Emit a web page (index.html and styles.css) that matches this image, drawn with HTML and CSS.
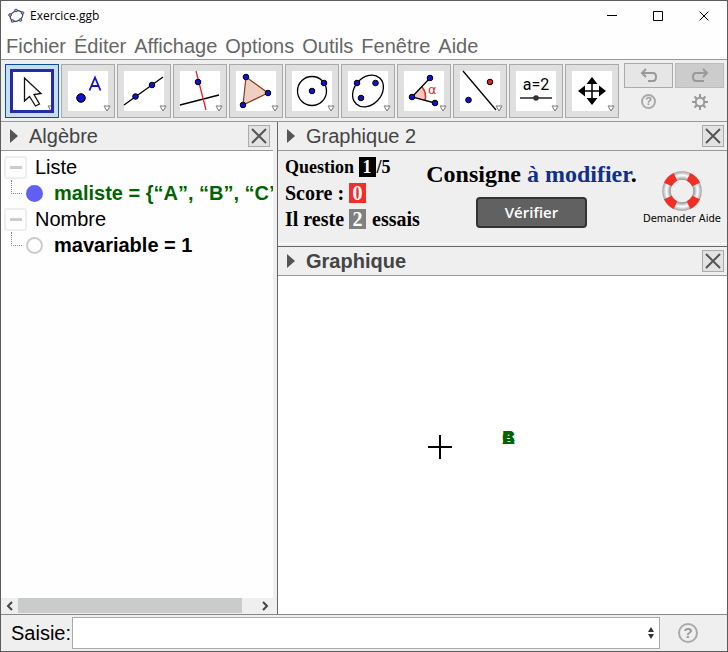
FILE: index.html
```html
<!DOCTYPE html>
<html lang="fr">
<head>
<meta charset="utf-8">
<title>Exercice.ggb</title>
<link rel="stylesheet" href="styles.css">
</head>
<body>
<div class="window">
  <header class="titlebar">
    <svg class="app-icon" viewBox="0 0 17 16" aria-hidden="true">
      <ellipse cx="8.500" cy="8" rx="6.500" ry="5" fill="none" stroke="#444" stroke-width="1.200" transform="rotate(-25 8.500 8)"/>
      <g fill="#99f" stroke="#333" stroke-width=".7"><circle cx="8" cy="2.500" r="1.400"/><circle cx="14.500" cy="5" r="1.400"/><circle cx="12.500" cy="12" r="1.400"/><circle cx="4.500" cy="13" r="1.400"/><circle cx="2" cy="7" r="1.400"/></g>
    </svg>
    <h1 class="title">Exercice.ggb</h1>
    <div class="window-controls">
      <button type="button" aria-label="Réduire"><svg viewBox="0 0 12 12"><path d="M1 5.500h10"/></svg></button>
      <button type="button" aria-label="Agrandir"><svg viewBox="0 0 12 12"><path d="M1.500 1.500h9v9h-9z"/></svg></button>
      <button type="button" aria-label="Fermer"><svg viewBox="0 0 12 12"><path d="M1.500 1.500l9 9M10.500 1.500l-9 9"/></svg></button>
    </div>
  </header>

  <nav class="menubar">
    <a href="#">Fichier</a><a href="#">Éditer</a><a href="#">Affichage</a><a href="#">Options</a><a href="#">Outils</a><a href="#">Fenêtre</a><a href="#">Aide</a>
  </nav>

  <div class="toolbar">
    <div class="tools">
      <button type="button" class="tool selected" aria-label="Déplacer"><svg viewBox="0 0 40 40"><path d="M12.500 7v23l5-4.500 6 9.500 4-2-5.500-9.500 7-1z" fill="#fff" stroke="#111" stroke-width="1.300"/><path class="more" d="M36 35h6l-3 5z"/></svg></button>
      <button type="button" class="tool" aria-label="Point"><svg viewBox="0 0 40 40"><circle class="pt" cx="13" cy="27" r="4.300"/><path d="M21.500 19.500L27 6.500l5.500 13M23.500 15h7" fill="none" stroke="#11c" stroke-width="1.800"/><path class="more" d="M36 35h6l-3 5z"/></svg></button>
      <button type="button" class="tool" aria-label="Droite"><svg viewBox="0 0 40 40"><path class="ln" d="M0 34L39 6"/><circle class="pt" cx="11.500" cy="25.500" r="2.800"/><circle class="pt" cx="28" cy="14" r="2.800"/><path class="more" d="M36 35h6l-3 5z"/></svg></button>
      <button type="button" class="tool" aria-label="Perpendiculaire"><svg viewBox="0 0 40 40"><path class="ln" d="M0 34l39-10"/><path d="M16 0l10 39" stroke="#e22" stroke-width="1.300"/><circle class="pt" cx="18" cy="11" r="2.800"/><path class="more" d="M36 35h6l-3 5z"/></svg></button>
      <button type="button" class="tool" aria-label="Polygone"><svg viewBox="0 0 40 40"><path d="M10 6l22 16-25 12z" fill="#efcfc0" stroke="#833d1c" stroke-width="1.200"/><circle class="pt" cx="10" cy="6" r="2.800"/><circle class="pt" cx="32" cy="22" r="2.800"/><circle class="pt" cx="7" cy="34" r="2.800"/><path class="more" d="M36 35h6l-3 5z"/></svg></button>
      <button type="button" class="tool" aria-label="Cercle"><svg viewBox="0 0 40 40"><circle class="ln" cx="20" cy="20" r="14.500"/><circle class="pt" cx="20" cy="20" r="2.800"/><circle class="pt" cx="32" cy="12" r="2.800"/><path class="more" d="M36 35h6l-3 5z"/></svg></button>
      <button type="button" class="tool" aria-label="Ellipse"><svg viewBox="0 0 40 40"><ellipse class="ln" cx="20" cy="20" rx="17.500" ry="13.500" transform="rotate(-48 20 20)"/><circle class="pt" cx="9" cy="12" r="2.800"/><circle class="pt" cx="27.500" cy="12" r="2.800"/><circle class="pt" cx="13" cy="27" r="2.800"/><path class="more" d="M36 35h6l-3 5z"/></svg></button>
      <button type="button" class="tool" aria-label="Angle"><svg viewBox="0 0 40 40"><path d="M8 26l10-10q5 6 3 13z" fill="#f6c6c0"/><path d="M18 16q5 6 3 13" fill="none" stroke="#e22" stroke-width="1.500"/><path class="ln" d="M26 7L8 26l23 6"/><circle class="pt" cx="26" cy="7" r="2.800"/><circle class="pt" cx="8" cy="26" r="2.800"/><circle class="pt" cx="31" cy="32" r="2.800"/><text x="24" y="23" class="alpha">α</text><path class="more" d="M36 35h6l-3 5z"/></svg></button>
      <button type="button" class="tool" aria-label="Symétrie"><svg viewBox="0 0 40 40"><path class="ln" d="M3 0l33 39"/><circle class="pt red" cx="30" cy="11" r="2.800"/><circle class="pt" cx="8.500" cy="29" r="2.800"/><path class="more" d="M36 35h6l-3 5z"/></svg></button>
      <button type="button" class="tool" aria-label="Curseur"><svg viewBox="0 0 40 40"><text x="20" y="19" class="slider-label">a=2</text><path class="ln" d="M4 27h32"/><circle cx="20" cy="27" r="2.800" fill="#333"/><path class="more" d="M36 35h6l-3 5z"/></svg></button>
      <button type="button" class="tool" aria-label="Déplacer la vue"><svg viewBox="0 0 40 40"><path d="M20 10v20M10 20h20" stroke="#000" stroke-width="1.500"/><path d="M20 6l5.500 7h-11zM20 34l5.500-7h-11zM6 20l7-5.500v11zM34 20l-7-5.500v11z"/><path class="more" d="M36 35h6l-3 5z"/></svg></button>
    </div>
    <div class="side-tools">
      <button type="button" class="history" aria-label="Annuler"><svg viewBox="0 0 18 16"><path d="M6 1L2 5l4 4M2 5h11q3 0 3 4t-3 4H8"/></svg></button>
      <button type="button" class="history redo" aria-label="Rétablir"><svg viewBox="0 0 18 16"><path d="M12 1l4 4-4 4M16 5H5Q2 5 2 9t3 4h8"/></svg></button>
      <button type="button" class="plain help" aria-label="Aide">?</button>
      <button type="button" class="plain" aria-label="Préférences"><svg viewBox="0 0 16 16"><circle cx="8" cy="8" r="4.300"/><path d="M8 0v4M8 12v4M0 8h4M12 8h4M2.500 2.500l2.700 2.700M10.800 10.800l2.700 2.700M13.500 2.500l-2.700 2.700M5.200 10.800l-2.700 2.700"/></svg></button>
    </div>
  </div>

  <main class="workspace">
    <section class="algebra">
      <div class="panel-head"><span class="arrow"></span><h2>Algèbre</h2><button type="button" class="close" aria-label="Fermer Algèbre"><svg viewBox="0 0 20 20"><path d="M3 3l14 14M17 3L3 17"/></svg></button></div>
      <div class="tree">
        <div class="row"><button type="button" class="toggle" aria-label="Replier Liste"></button><span class="group">Liste</span></div>
        <div class="row leaf"><span class="branch"></span><button type="button" class="marker on" aria-label="Masquer maliste"></button><span class="value list">maliste = {“A”, “B”, “C”</span></div>
        <div class="row"><button type="button" class="toggle" aria-label="Replier Nombre"></button><span class="group">Nombre</span></div>
        <div class="row leaf"><span class="branch"></span><button type="button" class="marker" aria-label="Afficher mavariable"></button><span class="value">mavariable = 1</span></div>
      </div>
      <div class="scrollbar">
        <button type="button" aria-label="Défiler à gauche"><svg viewBox="0 0 8 10"><path d="M6 1L2 5l4 4"/></svg></button>
        <div class="track"><div class="thumb"></div></div>
        <button type="button" aria-label="Défiler à droite"><svg viewBox="0 0 8 10"><path d="M2 1l4 4-4 4"/></svg></button>
      </div>
    </section>

    <div class="views">
      <section class="view-two">
        <div class="panel-head"><span class="arrow"></span><h2>Graphique 2</h2><button type="button" class="close" aria-label="Fermer Graphique 2"><svg viewBox="0 0 20 20"><path d="M3 3l14 14M17 3L3 17"/></svg></button></div>
        <div class="exercise">
          <div class="status">
            <p class="question">Question <b class="badge black">1</b>/5</p>
            <p>Score : <b class="badge scarlet">0</b></p>
            <p>Il reste <b class="badge gray">2</b> essais</p>
          </div>
          <div class="task">
            <p class="instruction">Consigne <span>à modifier</span>.</p>
            <button type="button" class="check">Vérifier</button>
          </div>
          <button type="button" class="ask">
            <svg viewBox="0 0 42 42" aria-hidden="true">
              <defs><radialGradient id="ring" gradientUnits="userSpaceOnUse" cx="21" cy="21" r="20"><stop offset=".58" stop-color="#999"/><stop offset=".78" stop-color="#fff"/><stop offset="1" stop-color="#999"/></radialGradient></defs>
              <circle cx="21" cy="21" r="15.500" fill="none" stroke="url(#ring)" stroke-width="8.500"/>
              <g fill="none" stroke="#f22f24" stroke-width="8.500"><path d="M27.500 6.900A15.500 15.500 0 0 1 35.100 14.500M35.100 27.500A15.500 15.500 0 0 1 27.500 35.100M14.500 35.100A15.500 15.500 0 0 1 6.900 27.500M6.900 14.500A15.500 15.500 0 0 1 14.500 6.900"/></g>
            </svg>
            <span>Demander Aide</span>
          </button>
        </div>
      </section>
      <section class="view-one">
        <div class="panel-head active"><span class="arrow"></span><h2>Graphique</h2><button type="button" class="close" aria-label="Fermer Graphique"><svg viewBox="0 0 20 20"><path d="M3 3l14 14M17 3L3 17"/></svg></button></div>
        <div class="canvas">
          <svg class="cursor" viewBox="0 0 24 24" aria-hidden="true"><path d="M12 0v24M0 12h24"/></svg>
          <span class="letter">A</span><span class="letter">B</span><span class="letter">C</span>
        </div>
      </section>
    </div>
  </main>

  <form class="input-bar">
    <label for="entry">Saisie:</label>
    <div class="entry-box">
      <input id="entry" type="text">
      <button type="button" class="step" aria-label="Historique"><svg viewBox="0 0 6 12"><path d="M3 0l3 5H0zM3 12l3-5H0z"/></svg></button>
    </div>
    <button type="button" class="plain help large" aria-label="Aide saisie">?</button>
  </form>
</div>
</body>
</html>
```
FILE: styles.css
```css
* { box-sizing: border-box; }
body {
  margin: 0;
  font: 20px/24px "Liberation Sans", Arial, sans-serif;
  color: #000;
}
h1, h2, p { margin: 0; }
h1, h2 { font-weight: normal; }
button {
  margin: 0;
  padding: 0;
  border: 0;
  background: none;
  font: inherit;
  color: inherit;
}
svg { display: block; }

.window {
  display: flex;
  flex-direction: column;
  min-height: 100vh;
  border: 1px solid #5c5c5c;
  background: #fefefe;
}

.titlebar { display: flex; align-items: center; height: 30px; padding-left: 7px; }
.app-icon { width: 17px; height: 16px; }
.title { margin-left: 5px; font: 12px/16px "Open Sans", sans-serif; }
.window-controls { display: flex; margin-left: auto; }
.window-controls button { display: grid; place-items: center; width: 46px; height: 28px; }
.window-controls svg { width: 12px; height: 12px; fill: none; stroke: #000; }

.menubar { display: flex; gap: 8px; height: 28px; padding: 3px 5px 0; }
.menubar a { color: #666; text-decoration: none; }

.toolbar {
  display: flex;
  justify-content: space-between;
  height: 63px;
  padding: 3px 3px 0 4px;
  border-top: 1px solid #999;
  border-bottom: 1px solid #999;
  background: #efefef;
}
.tools { display: flex; gap: 2px; padding-top: 1px; }
.tool {
  display: grid;
  place-items: center;
  width: 54px;
  height: 54px;
  border: 1px solid #aaa;
  background: #dfdfdf;
}
.tool svg { width: 40px; height: 40px; background: #fff; overflow: visible; }
.tool.selected { border-color: #0f4f94; background: #c5def5; }
.tool.selected svg { outline: 3px solid #262ba0; outline-offset: -1px; }
.pt { fill: #11c; stroke: #000; }
.pt.red { fill: #d22; }
.ln { fill: none; stroke: #000; stroke-width: 1.3; }
.more { fill: #fff; stroke: #777; }
.alpha { font: 13px "DejaVu Sans", sans-serif; fill: #e22; }
.slider-label { font: 16px Roboto, sans-serif; text-anchor: middle; }

.side-tools { display: grid; grid-template-columns: 49px 49px; column-gap: 2px; align-content: start; row-gap: 6px; justify-items: center; }
.history { display: grid; place-items: center; width: 49px; height: 25px; border: 1px solid #aaa; background: #e6e6e6; }
.history svg { width: 18px; height: 16px; fill: none; stroke: #999; stroke-width: 2; }
.history.redo { background: #ccc; border-color: #bbb; }
.plain svg { width: 16px; height: 16px; fill: none; stroke: #999; stroke-width: 2; }
.help {
  width: 15px;
  height: 15px;
  border: 2px solid #aaa;
  border-radius: 50%;
  color: #999;
  font-size: 11px;
  font-weight: bold;
  line-height: 11px;
}
.help.large { width: 20px; height: 20px; font-size: 15px; line-height: 16px; }

.workspace { display: grid; flex: 1; grid-template-columns: minmax(0, 276fr) minmax(0, 450fr); }
.algebra { display: flex; flex-direction: column; border-right: 4px solid #efefef; background: #fefefe; }
.panel-head {
  display: flex;
  align-items: center;
  height: 29px;
  padding: 0 3px 0 9px;
  border-bottom: 1px solid #999;
  background: #efefef;
  color: #444;
}
.arrow { border: solid transparent; border-width: 7px 0 7px 8px; border-left-color: #555; }
.panel-head h2 { flex: 1; margin-left: 11px; font-size: 20px; line-height: 28px; }
.panel-head.active h2 { font-weight: bold; }
.close { width: 22px; height: 22px; border: 1px solid #aaa; background: #e2e2e2; }
.close svg { width: 20px; height: 20px; fill: none; stroke: #555; stroke-width: 2; }

.tree { flex: 1; padding: 3px 0 0 3px; }
.row { display: flex; align-items: center; height: 26px; overflow: hidden; white-space: nowrap; }
.toggle { display: grid; place-items: center; width: 23px; height: 23px; border: 2px solid #eee; border-radius: 3px; }
.toggle::before { content: ""; width: 12px; height: 3px; background: #ccc; }
.group { margin-left: 8px; }
.branch { flex: none; width: 11px; height: 14px; margin-left: 7px; align-self: flex-start; border: dotted #888; border-width: 0 0 1px 1px; }
.marker { flex: none; width: 17px; height: 17px; margin-left: 4px; border: 2px solid #ccc; border-radius: 50%; }
.marker.on { border-color: #6060f0; background: #6060f0; }
.value { margin-left: 11px; font-weight: bold; }
.list { color: #006400; }

.scrollbar { display: flex; height: 16px; padding-bottom: 1px; background: #efefef; }
.scrollbar button { display: grid; place-items: center; width: 17px; }
.scrollbar svg { width: 8px; height: 10px; fill: none; stroke: #444; stroke-width: 2; }
.track { flex: 1; }
.thumb { width: 94%; height: 15px; background: #cacccb; }

.views { display: flex; flex-direction: column; border-left: 1px solid #666; }
.view-two { border-bottom: 1px solid #666; background: #efefef; }
.exercise {
  display: flex;
  justify-content: space-between;
  height: 93px;
  margin-bottom: 2px;
  padding: 6px 6px 0 7px;
  border-bottom: 1px solid #fff;
}
.status { display: grid; gap: 5px; align-content: start; font: bold 20px/21px "Liberation Serif", serif; white-space: nowrap; }
.question { font-size: 18px; }
.badge { display: inline-block; width: 17px; height: 20px; margin-right: 1px; line-height: 20px; text-align: center; color: #fff; vertical-align: top; }
.black { background: #000; }
.scarlet { background: #f22f2a; }
.gray { background: #808080; }
.task { display: flex; flex-direction: column; align-items: center; gap: 9px; padding-top: 3px; }
.instruction { font: bold 24px/28px "Liberation Serif", serif; white-space: nowrap; }
.instruction span { color: #103090; }
.check {
  width: 111px;
  height: 31px;
  border: 2px solid #333;
  border-radius: 4px;
  background: #616161;
  color: #fff;
  font: 600 15px/27px "Open Sans", sans-serif;
}
.ask { display: flex; flex-direction: column; align-items: center; align-self: start; padding-top: 13px; font: 10px/14px "DejaVu Sans", sans-serif; white-space: nowrap; }
.ask svg { width: 42px; height: 42px; }

.view-one { display: flex; flex: 1; flex-direction: column; }
.canvas { position: relative; flex: 1; background: #fff; }
.cursor { position: absolute; top: 159px; left: 150px; width: 24px; height: 24px; stroke: #000; stroke-width: 2; }
.letter { position: absolute; top: 150px; left: 224px; font-size: 18px; font-weight: bold; color: #006400; }

.input-bar { display: flex; align-items: center; height: 37px; padding: 0 29px 0 10px; border-top: 1px solid #888; background: #efefef; }
.entry-box { display: flex; flex: 1; height: 32px; margin: 0 18px 0 1px; border: 1px solid #aaa; background: #fff; }
.entry-box input { flex: 1; min-width: 0; border: 0; outline: 0; background: none; font: inherit; }
.step { display: grid; place-items: center; width: 16px; }
.step svg { width: 6px; height: 12px; fill: #333; }
```
